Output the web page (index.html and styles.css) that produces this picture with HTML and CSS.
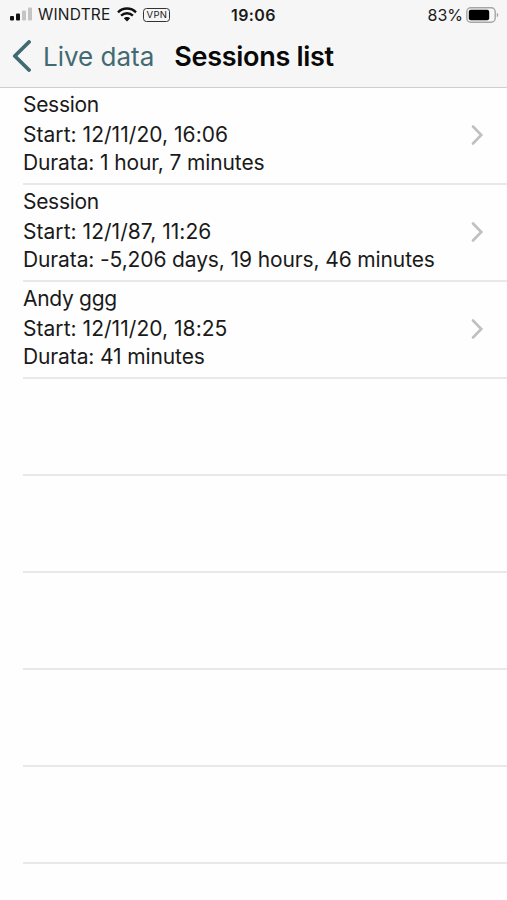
FILE: index.html
```html
<!DOCTYPE html>
<html lang="en">
  <head>
    <meta charset="utf-8" />
    <meta name="viewport" content="width=device-width, initial-scale=1.0" />
    <title>Sessions list</title>
    <link rel="stylesheet" href="styles.css">
  </head>

  <body>
    <header>
      <div class="status">
        <div class="status-left">
          <svg class="signal" width="23" height="14" viewBox="0 0 23 14">
            <rect x="0" y="9" width="4" height="4.5" rx="1" fill="#111" />
            <rect x="6" y="6.5" width="4" height="7" rx="1" fill="#111" />
            <rect x="12" y="3.5" width="4" height="10" rx="1" fill="#c4c4c5" />
            <rect x="18" y="0.5" width="4" height="13" rx="1" fill="#c4c4c5" />
          </svg>
          <span class="carrier">WINDTRE</span>
          <svg class="wifi" width="20" height="15" viewBox="0 0 20 15">
            <path d="M1 5.3C6 0.3 14 0.3 19 5.3M4.1 8.7C7.4 5.4 12.6 5.4 15.9 8.7" fill="none" stroke="#111" stroke-width="2.4" />
            <path d="M6.8 11.2C8.5 9.5 11.5 9.5 13.2 11.2L10 14.5Z" fill="#111" />
          </svg>
          <span class="vpn">VPN</span>
        </div>
        <div class="clock">19:06</div>
        <div class="status-right">
          <span class="percent">83%</span>
          <svg class="battery" width="33" height="16" viewBox="0 0 33 16">
            <rect x="0.8" y="0.8" width="28.4" height="14.4" rx="4" fill="none" stroke="#a5a5a5" stroke-width="1.4" />
            <rect x="2.8" y="2.8" width="20.4" height="10.4" rx="2" fill="#000" />
            <path d="M30.8 5.7Q32.4 6.5 32.4 8T30.8 10.3Z" fill="#a5a5a5" />
          </svg>
        </div>
      </div>
      <nav>
        <a class="back" href="#">
          <svg width="20" height="32" viewBox="0 0 20 32">
            <path d="M18 2L3.8 16L18 30" fill="none" stroke="#416a73" stroke-width="3.8" stroke-linecap="round" stroke-linejoin="round" />
          </svg>
          <span class="back-label">Live data</span>
        </a>
        <h1>Sessions list</h1>
      </nav>
    </header>

    <main>
      <ul class="sessions">
        <li>
          <div class="info">
            <p class="name">Session</p>
            <p class="start">Start: 12/11/20, 16:06</p>
            <p class="duration">Durata: 1 hour, 7 minutes</p>
          </div>
          <svg class="chevron" width="14" height="20" viewBox="0 0 14 20">
            <path d="M3 1.5L11.3 10L3 18.5" fill="none" stroke="#c0c0c2" stroke-width="2.6" stroke-linecap="round" />
          </svg>
        </li>
        <li>
          <div class="info">
            <p class="name">Session</p>
            <p class="start">Start: 12/1/87, 11:26</p>
            <p class="duration">Durata: -5,206 days, 19 hours, 46 minutes</p>
          </div>
          <svg class="chevron" width="14" height="20" viewBox="0 0 14 20">
            <path d="M3 1.5L11.3 10L3 18.5" fill="none" stroke="#c0c0c2" stroke-width="2.6" stroke-linecap="round" />
          </svg>
        </li>
        <li>
          <div class="info">
            <p class="name">Andy ggg</p>
            <p class="start">Start: 12/11/20, 18:25</p>
            <p class="duration">Durata: 41 minutes</p>
          </div>
          <svg class="chevron" width="14" height="20" viewBox="0 0 14 20">
            <path d="M3 1.5L11.3 10L3 18.5" fill="none" stroke="#c0c0c2" stroke-width="2.6" stroke-linecap="round" />
          </svg>
        </li>
        <li></li>
        <li></li>
        <li></li>
        <li></li>
        <li></li>
      </ul>
    </main>
  </body>
</html>
```

FILE: styles.css
```css
* {
  box-sizing: border-box;
}
body,
h1,
p,
ul {
  margin: 0;
  padding: 0;
}
body {
  height: 900px;
  overflow: hidden;
  background: #fefefe;
  color: #1a1a1a;
  font-family: Inter, "Liberation Sans", sans-serif;
}
header {
  height: 88px;
  background: #f6f6f6;
  border-bottom: 1px solid #cfcfcf;
}
.status {
  display: grid;
  grid-template-columns: 1fr auto 1fr;
  align-items: center;
  height: 29px;
  padding: 0 8px 0 10px;
  font-size: 16px;
}
.status-left,
.status-right {
  display: flex;
  align-items: center;
}
.status-right {
  justify-content: flex-end;
}
.signal {
  margin-bottom: 1px;
}
.carrier {
  margin: 0 6px 0 5px;
  font-size: 15.5px;
  letter-spacing: 0.2px;
}
.vpn {
  height: 14px;
  margin-left: 6px;
  padding: 0 2px 0 3px;
  border: 1px solid #333;
  border-radius: 3.5px;
  font-size: 9.5px;
  line-height: 12px;
  letter-spacing: 0.3px;
}
.clock {
  margin-right: 2px;
  font-weight: 600;
  letter-spacing: 0.4px;
}
.percent {
  margin-right: 3px;
}
nav {
  display: flex;
  align-items: center;
  height: 54px;
  padding-left: 11px;
}
.back {
  display: flex;
  align-items: center;
  color: #416a73;
  text-decoration: none;
}
.back-label {
  margin-left: 12px;
  font-size: 26px;
}
h1 {
  margin-left: 20px;
  color: #080808;
  font-size: 27px;
  font-weight: 600;
  letter-spacing: -0.3px;
}
.sessions {
  list-style: none;
}
.sessions li {
  display: flex;
  justify-content: space-between;
  height: 97px;
  margin-left: 23px;
  padding-right: 23px;
  border-bottom: 2px solid #e8e8e8;
  font-size: 21px;
}
.info {
  padding-top: 2px;
}
.info p {
  line-height: 28px;
  white-space: nowrap;
}
.info .name {
  line-height: 31px;
  height: 31px;
  margin-top: -1px;
  margin-bottom: 1px;
  letter-spacing: -0.3px;
}
.info .start {
  letter-spacing: 0.04px;
}
.info .duration {
  letter-spacing: -0.12px;
}
.chevron {
  margin-top: 37px;
}
```
